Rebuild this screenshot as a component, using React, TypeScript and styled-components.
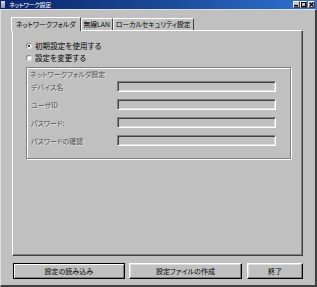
import styled, { createGlobalStyle } from "styled-components";

const GlobalStyle = createGlobalStyle`
  html, body {
    margin: 0;
    padding: 0;
    background: #c0c0c0;
  }
  body {
    font-family: "Noto Sans CJK JP", "Liberation Sans", sans-serif;
    font-feature-settings: "palt" 1;
  }
`;

type BevelProps = { $default?: boolean };

const fields = ["デバイス名", "ユーザID", "パスワード:", "パスワードの確認"];

const App = () => {
  return (
    <>
      <GlobalStyle />
      <StyledWindow>
        <StyledTitleBar>
          <StyledTitleIcon />
          <StyledTitleText>ネットワーク設定</StyledTitleText>
          <StyledTitleButtons>
            <StyledCaptionButton>
              <svg width="5" height="5" viewBox="0 0 5 5">
                <rect x="0" y="3" width="4" height="1.5" fill="#000" />
              </svg>
            </StyledCaptionButton>
            <StyledCaptionButton>
              <svg width="5" height="5" viewBox="0 0 5 5">
                <rect x="0.5" y="0.5" width="4" height="4" fill="none" stroke="#000" strokeWidth="1" />
              </svg>
            </StyledCaptionButton>
            <StyledCaptionButton $gap>
              <svg width="5" height="5" viewBox="0 0 5 5">
                <path d="M0.5 0.5 L4.5 4.5 M4.5 0.5 L0.5 4.5" stroke="#000" strokeWidth="1.1" />
              </svg>
            </StyledCaptionButton>
          </StyledTitleButtons>
        </StyledTitleBar>

        <StyledBody>
          <StyledTabStrip>
            <StyledTab $active>ネットワークフォルダ</StyledTab>
            <StyledTab>無線LAN</StyledTab>
            <StyledTab>ローカルセキュリティ設定</StyledTab>
          </StyledTabStrip>

          <StyledPanel>
            <StyledRadioGroup>
              <StyledRadioRow>
                <StyledRadio $checked />
                <span>初期設定を使用する</span>
              </StyledRadioRow>
              <StyledRadioRow>
                <StyledRadio />
                <span>設定を変更する</span>
              </StyledRadioRow>
            </StyledRadioGroup>

            <StyledGroupBox>
              <StyledGroupLabel>ネットワークフォルダ設定</StyledGroupLabel>
              <StyledFieldList>
                {fields.map((label) => (
                  <StyledFieldRow key={label}>
                    <StyledFieldLabel>{label}</StyledFieldLabel>
                    <StyledInput />
                  </StyledFieldRow>
                ))}
              </StyledFieldList>
            </StyledGroupBox>
          </StyledPanel>

          <StyledButtonRow>
            <StyledButton $default style={{ width: 112 }}>設定の読み込み</StyledButton>
            <StyledButton style={{ width: 114 }}>設定ファイルの作成</StyledButton>
            <StyledButton style={{ width: 56 }}>終了</StyledButton>
          </StyledButtonRow>
        </StyledBody>
      </StyledWindow>
    </>
  );
};

const StyledWindow = styled.div`
  width: 317px;
  height: 287px;
  box-sizing: border-box;
  display: flex;
  flex-direction: column;
  background: #c0c0c0;
  overflow: hidden;
`;

const StyledTitleBar = styled.div`
  height: 9px;
  display: flex;
  align-items: center;
  background: linear-gradient(to right, #0a246a 0%, #1c4c9c 55%, #2f72d4 100%);
  padding-left: 1px;
  padding-right: 2px;
`;

const StyledTitleIcon = styled.div`
  width: 4px;
  height: 7px;
  background: linear-gradient(#e0e0e0, #8090b0);
  margin-right: 4px;
`;

const StyledTitleText = styled.span`
  color: #fff;
  font-size: 6px;
  line-height: 9px;
  letter-spacing: -0.2px;
`;

const StyledTitleButtons = styled.div`
  margin-left: auto;
  display: flex;
`;

const StyledCaptionButton = styled.div<{ $gap?: boolean }>`
  width: 7px;
  height: 7px;
  box-sizing: border-box;
  background: #c0c0c0;
  border-top: 1px solid #fff;
  border-left: 1px solid #fff;
  border-right: 1px solid #404040;
  border-bottom: 1px solid #404040;
  display: flex;
  align-items: center;
  justify-content: center;
  margin-left: ${(p) => (p.$gap ? "1px" : "0")};
  svg {
    display: block;
  }
`;

const StyledBody = styled.div`
  flex: 1;
  display: flex;
  flex-direction: column;
  padding: 6px 12px 0 11px;
  border-left: 1px solid #dfdfdf;
  border-right: 2px solid #404040;
  border-bottom: 2px solid #404040;
  border-top: 1px solid #dfdfdf;
`;

const StyledTabStrip = styled.div`
  display: flex;
  align-items: flex-end;
  height: 14px;
  position: relative;
  z-index: 1;
`;

const StyledTab = styled.div<{ $active?: boolean }>`
  font-size: 6.8px;
  line-height: 1;
  color: #000;
  height: ${(p) => (p.$active ? "14px" : "12px")};
  padding: 0 ${(p) => (p.$active ? "4px" : "2px")};
  margin-left: ${(p) => (p.$active ? "-1px" : "0")};
  margin-bottom: ${(p) => (p.$active ? "-1px" : "0")};
  box-sizing: border-box;
  display: flex;
  align-items: center;
  background: #c0c0c0;
  border-top: 1px solid #fff;
  border-left: 1px solid #fff;
  border-right: 1px solid #404040;
  border-top-left-radius: 1px;
  border-top-right-radius: 1px;
  white-space: nowrap;
`;

const StyledPanel = styled.div`
  height: 226px;
  box-sizing: border-box;
  border-top: 1px solid #fff;
  border-left: 1px solid #fff;
  border-right: 1px solid #404040;
  border-bottom: 1px solid #404040;
  box-shadow: inset -1px -1px 0 #808080;
  padding: 10px 11px 0 13px;
  display: flex;
  flex-direction: column;
`;

const StyledRadioGroup = styled.div`
  display: flex;
  flex-direction: column;
  gap: 3px;
  font-size: 7.5px;
  color: #000;
`;

const StyledRadioRow = styled.div`
  display: flex;
  align-items: center;
  gap: 3px;
  height: 9px;
  line-height: 9px;
  span {
    letter-spacing: 0.1px;
  }
`;

const StyledRadio = styled.span<{ $checked?: boolean }>`
  width: 6px;
  height: 6px;
  box-sizing: border-box;
  border-radius: 50%;
  background: #fff;
  border: 1px solid #808080;
  border-right-color: #dfdfdf;
  border-bottom-color: #dfdfdf;
  display: inline-flex;
  align-items: center;
  justify-content: center;
  &::after {
    content: "";
    width: 2px;
    height: 2px;
    border-radius: 50%;
    background: ${(p) => (p.$checked ? "#000" : "transparent")};
  }
`;

const StyledGroupBox = styled.div`
  margin-top: 5px;
  height: 92px;
  box-sizing: border-box;
  border: 1px solid #808080;
  box-shadow: inset 1px 1px 0 #fff, 1px 1px 0 #fff;
  padding: 2px 0 0 3px;
  display: flex;
  flex-direction: column;
`;

const StyledGroupLabel = styled.div`
  font-size: 7px;
  line-height: 8px;
  color: #505050;
  text-shadow: 1px 1px 0 #e0e0e0;
`;

const StyledFieldList = styled.div`
  display: flex;
  flex-direction: column;
  gap: 7px;
  margin-top: 3px;
`;

const StyledFieldRow = styled.div`
  display: flex;
  align-items: center;
  height: 11px;
`;

const StyledFieldLabel = styled.span`
  width: 86px;
  padding-left: 1px;
  font-size: 7px;
  color: #505050;
  text-shadow: 1px 1px 0 #e0e0e0;
  white-space: nowrap;
`;

const StyledInput = styled.div`
  width: 159px;
  height: 11px;
  box-sizing: border-box;
  background: #c0c0c0;
  border-top: 1px solid #808080;
  border-left: 1px solid #808080;
  border-right: 1px solid #fff;
  border-bottom: 1px solid #fff;
  box-shadow: inset 1px 1px 0 #404040, inset -1px -1px 0 #dfdfdf;
`;

const StyledButtonRow = styled.div`
  display: flex;
  margin-top: 7px;
  gap: 4px;
  padding-left: 1px;
  & > :last-child {
    margin-left: 1px;
  }
`;

const StyledButton = styled.div<BevelProps>`
  height: 16px;
  box-sizing: border-box;
  background: #c0c0c0;
  font-size: 7px;
  color: #000;
  display: flex;
  align-items: center;
  justify-content: center;
  border: 1px solid ${(p) => (p.$default ? "#000" : "transparent")};
  border-top-color: ${(p) => (p.$default ? "#000" : "#fff")};
  border-left-color: ${(p) => (p.$default ? "#000" : "#fff")};
  border-right-color: #000;
  border-bottom-color: #000;
  box-shadow: ${(p) =>
    p.$default
      ? "inset 1px 1px 0 #fff, inset -1px -1px 0 #808080"
      : "inset -1px -1px 0 #808080, inset 1px 1px 0 #dfdfdf"};
`;

export default App;
